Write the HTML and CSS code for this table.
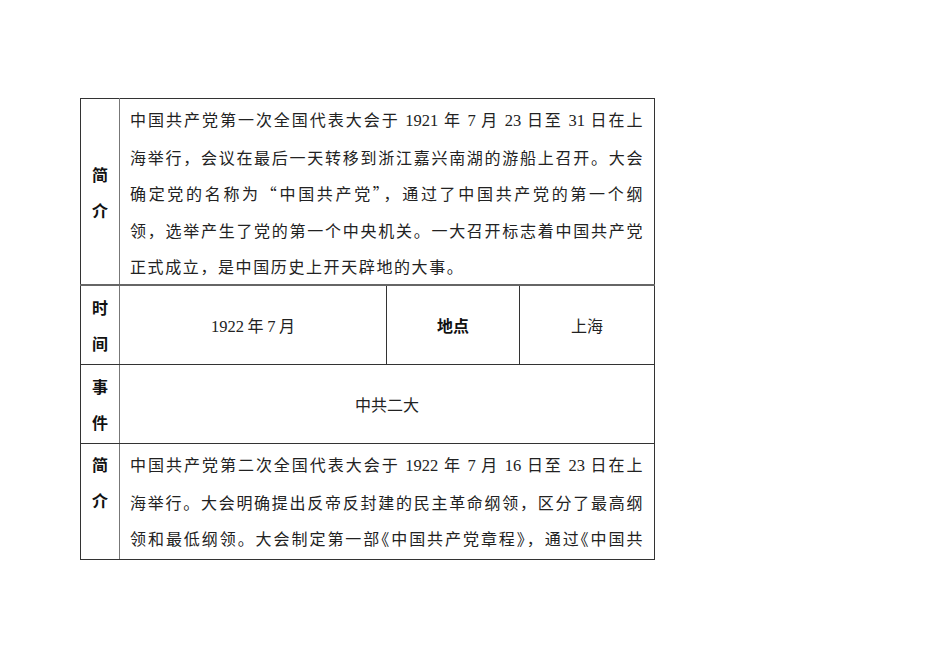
FILE: index.html
```html
<!DOCTYPE html>
<html lang="zh-CN">
<head>
<meta charset="utf-8">
<link rel="stylesheet" href="styles.css">
</head>
<body>
<div class="page">
<table class="sheet">
  <colgroup>
    <col class="c-label">
    <col class="c-time">
    <col class="c-plabel">
    <col class="c-place">
  </colgroup>
  <tr class="r-intro1">
    <td class="label">简<br>介</td>
    <td class="body" colspan="3">
      <span class="ln">中国共产党第一次全国代表大会于 <span class="num">1921</span> 年 <span class="num">7</span> 月 <span class="num">23</span> 日至 <span class="num">31</span> 日在上</span>
      <span class="ln">海举行，会议在最后一天转移到浙江嘉兴南湖的游船上召开。大会</span>
      <span class="ln">确定党的名称为“中国共产党”，通过了中国共产党的第一个纲</span>
      <span class="ln">领，选举产生了党的第一个中央机关。一大召开标志着中国共产党</span>
      <span class="ln last">正式成立，是中国历史上开天辟地的大事。</span>
    </td>
  </tr>
  <tr class="r-mid">
    <td class="label">时<br>间</td>
    <td class="center"><span class="num">1922</span> 年 <span class="num">7</span> 月</td>
    <td class="center strong">地点</td>
    <td class="center">上海</td>
  </tr>
  <tr class="r-mid">
    <td class="label">事<br>件</td>
    <td class="center" colspan="3">中共二大</td>
  </tr>
  <tr class="r-intro2">
    <td class="label top">简<br>介</td>
    <td class="body" colspan="3">
      <span class="ln">中国共产党第二次全国代表大会于 <span class="num">1922</span> 年 <span class="num">7</span> 月 <span class="num">16</span> 日至 <span class="num">23</span> 日在上</span>
      <span class="ln">海举行。大会明确提出反帝反封建的民主革命纲领，区分了最高纲</span>
      <span class="ln">领和最低纲领。大会制定第一部<span class="half">《</span>中国共产党章程》，通过<span class="half">《</span>中国共</span>
    </td>
  </tr>
</table>
</div>
</body>
</html>
```
FILE: styles.css
```css
html, body {
  margin: 0;
  padding: 0;
  background: #ffffff;
}
.page {
  padding: 98px 0 0 80px;
}
.sheet {
  border-collapse: collapse;
  table-layout: fixed;
  width: 574px;
  font-family: "Noto Sans CJK SC", sans-serif;
  font-size: 16px;
  color: #222;
}
.num {
  font-family: "Liberation Serif", serif;
  font-size: 16.5px;
}
.half {
  font-feature-settings: "halt" 1;
}
.c-label { width: 39px; }
.c-time { width: 267px; }
.c-plabel { width: 133px; }
.c-place { width: 135px; }
.sheet td {
  border: 1px solid #333;
  padding: 0;
}
.sheet td.label {
  border-right: 1.5px solid #777;
  text-align: center;
  vertical-align: middle;
  font-weight: 700;
  line-height: 36px;
  color: #111;
}
.sheet td.label.top {
  vertical-align: top;
  padding-top: 2px;
  line-height: 36.2px;
}
.r-intro1 td {
  height: 1px;
  border-bottom: 2px solid #666;
}
.r-mid td {
  height: 78px;
}
.r-intro2 td {
  height: 113px;
}
.sheet td.body {
  vertical-align: top;
  padding: 2px 10px 0 10px;
  line-height: 36.2px;
  letter-spacing: 1.6px;
}
.ln {
  display: block;
  text-align: justify;
  text-align-last: justify;
  white-space: nowrap;
}
.ln .num {
  letter-spacing: 0;
}
.ln.last {
  text-align-last: left;
}
.center {
  text-align: center;
  vertical-align: middle;
}
.strong {
  font-weight: 700;
  color: #111;
}
```
